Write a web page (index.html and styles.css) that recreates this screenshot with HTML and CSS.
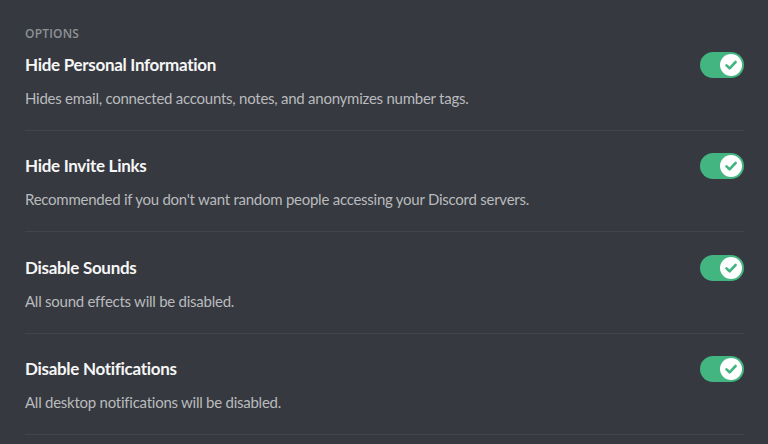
FILE: index.html
```html
<!DOCTYPE html>
<html lang="en">
<head>
<meta charset="utf-8">
<link rel="stylesheet" href="styles.css">
</head>
<body>
<main class="settings">
  <h2 class="section-label">Options</h2>
  <section class="option">
    <div class="option-head">
      <h3 class="option-title">Hide Personal Information</h3>
      <span class="toggle"><span class="knob"><svg viewBox="0 0 20 20" class="check"><path d="M5.5 10.4 L8.6 13.3 L14.6 7" /></svg></span></span>
    </div>
    <p class="option-desc">Hides email, connected accounts, notes, and anonymizes number tags.</p>
  </section>
  <section class="option">
    <div class="option-head">
      <h3 class="option-title">Hide Invite Links</h3>
      <span class="toggle"><span class="knob"><svg viewBox="0 0 20 20" class="check"><path d="M5.5 10.4 L8.6 13.3 L14.6 7" /></svg></span></span>
    </div>
    <p class="option-desc">Recommended if you don't want random people accessing your Discord servers.</p>
  </section>
  <section class="option">
    <div class="option-head">
      <h3 class="option-title">Disable Sounds</h3>
      <span class="toggle"><span class="knob"><svg viewBox="0 0 20 20" class="check"><path d="M5.5 10.4 L8.6 13.3 L14.6 7" /></svg></span></span>
    </div>
    <p class="option-desc">All sound effects will be disabled.</p>
  </section>
  <section class="option">
    <div class="option-head">
      <h3 class="option-title">Disable Notifications</h3>
      <span class="toggle"><span class="knob"><svg viewBox="0 0 20 20" class="check"><path d="M5.5 10.4 L8.6 13.3 L14.6 7" /></svg></span></span>
    </div>
    <p class="option-desc">All desktop notifications will be disabled.</p>
  </section>
</main>
</body>
</html>
```
FILE: styles.css
```css
html, body {
  margin: 0;
  padding: 0;
  background: #36393f;
  height: 100%;
  overflow: hidden;
}
body {
  font-family: "Lato", "Open Sans", sans-serif;
  -webkit-font-smoothing: antialiased;
}
.settings {
  padding: 26px 24px 0 25px;
}
.section-label {
  margin: 0 0 10px;
  font-family: "Open Sans", sans-serif;
  font-size: 12px;
  line-height: 16px;
  font-weight: 600;
  text-transform: uppercase;
  color: #8e9297;
  letter-spacing: 0.2px;
}
.option {
  padding-bottom: 22px;
  border-bottom: 1px solid #42454a;
  margin-bottom: 22.3px;
}
.option-head {
  display: flex;
  align-items: center;
  justify-content: space-between;
  height: 26px;
}
.option-title {
  margin: 0;
  font-size: 17px;
  line-height: 26px;
  font-weight: 700;
  letter-spacing: -0.3px;
  color: #f6f6f7;
}
.option-desc {
  margin: 10px 0 0;
  font-size: 15px;
  line-height: 20px;
  letter-spacing: -0.25px;
  color: #b9bbbe;
}
.toggle {
  display: flex;
  align-items: center;
  justify-content: flex-end;
  width: 44px;
  height: 26px;
  padding: 2px;
  box-sizing: border-box;
  border-radius: 13px;
  background: #43b581;
}
.knob {
  display: flex;
  align-items: center;
  justify-content: center;
  width: 22px;
  height: 22px;
  border-radius: 50%;
  background: #ffffff;
}
.check {
  width: 20px;
  height: 20px;
}
.check path {
  fill: none;
  stroke: #43b581;
  stroke-width: 2.6;
  stroke-linecap: round;
  stroke-linejoin: round;
}
```
